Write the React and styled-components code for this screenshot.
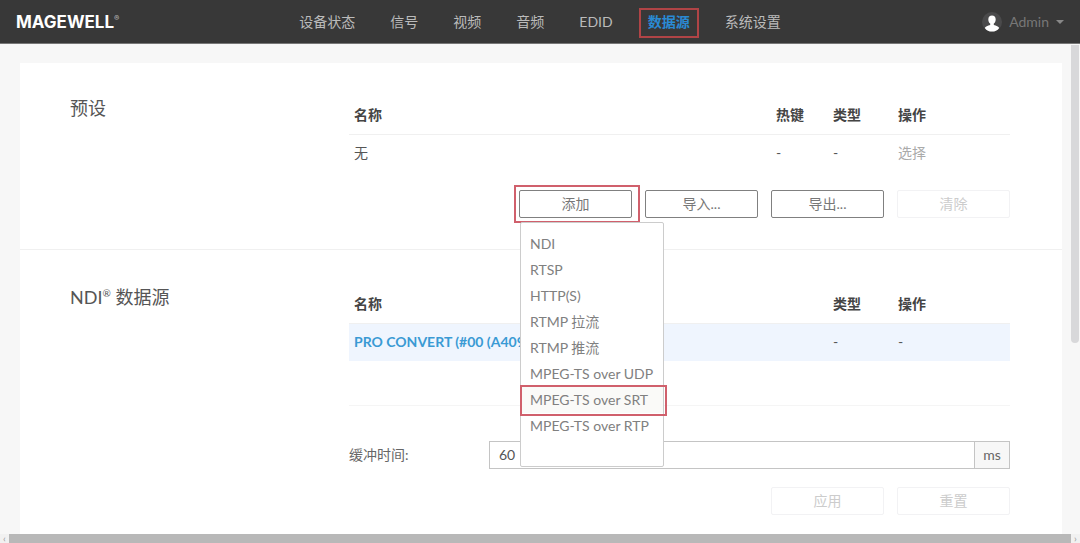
import React, { useState } from 'react';
import styled, { createGlobalStyle, css } from 'styled-components';

const navItems = ['设备状态', '信号', '视频', '音频', 'EDID', '数据源', '系统设置'];

const sourceTypes = [
  'NDI',
  'RTSP',
  'HTTP(S)',
  'RTMP 拉流',
  'RTMP 推流',
  'MPEG-TS over UDP',
  'MPEG-TS over SRT',
  'MPEG-TS over RTP',
];

const Header = () => (
  <TopBar>
    <Logo href="#home">
      MAGEWELL<LogoMark>®</LogoMark>
    </Logo>
    <Nav>
      {navItems.map((item) => (
        <NavLink key={item} href={`#${item}`} $active={item === '数据源'}>
          {item}
        </NavLink>
      ))}
    </Nav>
    <UserButton type="button">
      <svg width="20" height="20" viewBox="0 0 20 20" aria-hidden="true">
        <circle cx="10" cy="10" r="10" fill="#4a4a4b" />
        <path
          d="M10 3.6c-2.3 0-3.7 1.6-3.7 3.8 0 1.7.8 3.3 1.9 4.2v1.4c-2.500.7-4.800 1.400-5.400 2.900C4.600 18.600 7.100 19.600 10 19.600s5.400-1 7.200-3.700c-.6-1.500-2.900-2.200-5.400-2.900v-1.400c1.100-.9 1.900-2.500 1.900-4.200 0-2.200-1.400-3.800-3.700-3.800z"
          fill="#fff"
        />
      </svg>
      <span>Admin</span>
      <Caret />
    </UserButton>
  </TopBar>
);

const PresetSection = ({ isOpen, onToggle }) => (
  <Section>
    <Title>预设</Title>
    <div>
      <Table>
        <thead>
          <tr>
            <Th>名称</Th>
            <Th $width="57px">热键</Th>
            <Th $width="65px">类型</Th>
            <Th $width="117px">操作</Th>
          </tr>
        </thead>
        <tbody>
          <Row>
            <Td>无</Td>
            <Td>-</Td>
            <Td>-</Td>
            <Td $muted>选择</Td>
          </Row>
        </tbody>
      </Table>
      <ButtonRow>
        <AddBox>
          <Button type="button" aria-expanded={isOpen} onClick={onToggle}>
            添加
          </Button>
          {isOpen && (
            <Menu>
              {sourceTypes.map((type) => (
                <li key={type}>
                  <MenuItem type="button" $marked={type === 'MPEG-TS over SRT'}>
                    {type}
                  </MenuItem>
                </li>
              ))}
            </Menu>
          )}
        </AddBox>
        <Button type="button">导入...</Button>
        <Button type="button">导出...</Button>
        <Button type="button" disabled>
          清除
        </Button>
      </ButtonRow>
    </div>
  </Section>
);

const NdiSection = ({ buffer, onChange }) => (
  <Section>
    <Title>
      NDI<sup>®</sup> 数据源
    </Title>
    <div>
      <Table>
        <thead>
          <tr>
            <Th>名称</Th>
            <Th $width="65px">类型</Th>
            <Th $width="117px">操作</Th>
          </tr>
        </thead>
        <tbody>
          <Row $selected>
            <Td>PRO CONVERT (#00 (A409</Td>
            <Td>-</Td>
            <Td>-</Td>
          </Row>
        </tbody>
      </Table>
      <Divider />
      <Field>
        <label htmlFor="buffer">缓冲时间:</label>
        <InputGroup>
          <Input id="buffer" type="text" value={buffer} onChange={onChange} />
          <Unit>ms</Unit>
        </InputGroup>
      </Field>
      <ButtonRow>
        <Button type="button" disabled>
          应用
        </Button>
        <Button type="button" disabled>
          重置
        </Button>
      </ButtonRow>
    </div>
  </Section>
);

const App = () => {
  const [isOpen, setIsOpen] = useState(true);
  const [buffer, setBuffer] = useState('60');

  return (
    <Page>
      <GlobalStyle />
      <Header />
      <Body>
        <Card>
          <PresetSection isOpen={isOpen} onToggle={() => setIsOpen(!isOpen)} />
          <NdiSection buffer={buffer} onChange={(e) => setBuffer(e.target.value)} />
        </Card>
        <ScrollTrack>
          <ScrollThumb />
        </ScrollTrack>
      </Body>
      <BottomBar>
        <Arrow>‹</Arrow>
        <BottomThumb />
        <Arrow>›</Arrow>
      </BottomBar>
    </Page>
  );
};

const GlobalStyle = createGlobalStyle`
  * {
    box-sizing: border-box;
  }

  body {
    margin: 0;
    background: #f7f7f7;
    color: #666;
    font: 14px/20px Lato, 'Noto Sans CJK SC', sans-serif;
  }

  button,
  input {
    font: inherit;
  }
`;

const marker = css`
  content: '';
  position: absolute;
  border: 2px solid #d0606c;
  pointer-events: none;
`;

const Page = styled.div`
  display: flex;
  flex-direction: column;
  height: 100vh;
  overflow: hidden;
`;

const TopBar = styled.header`
  display: grid;
  grid-template-columns: 1fr auto 1fr;
  align-items: center;
  flex: none;
  height: 44px;
  padding: 0 16px;
  background: #383838;
  border-bottom: 1px solid #777;
`;

const Logo = styled.a`
  display: flex;
  color: #fff;
  font-family: Inter, sans-serif;
  font-size: 17px;
  font-weight: 700;
  text-decoration: none;
`;

const LogoMark = styled.span`
  color: #aaa;
  font-size: 8px;
  line-height: 12px;
`;

const Nav = styled.nav`
  display: flex;
  gap: 35px;
`;

const NavLink = styled.a`
  position: relative;
  color: ${({ $active }) => ($active ? '#2a8ad4' : '#bbb')};
  font-weight: ${({ $active }) => ($active ? 700 : 400)};
  text-decoration: none;

  &::after {
    ${({ $active }) =>
      $active &&
      css`
        ${marker}
        inset: -4px -9px -6px;
        border-color: #b04446;
      `}
  }
`;

const UserButton = styled.button`
  display: flex;
  align-items: center;
  justify-self: end;
  gap: 7px;
  padding: 0;
  border: 0;
  background: none;
  color: #777;
`;

const Caret = styled.span`
  border: 4px solid transparent;
  border-top-color: #888;
  border-bottom: 0;
`;

const Body = styled.div`
  display: flex;
  flex: 1;
  min-height: 0;
`;

const Card = styled.main`
  flex: 1;
  margin: 19px 9px 0 20px;
  background: #fff;
`;

const Section = styled.section`
  display: grid;
  grid-template-columns: 279px 1fr;
  padding: 33px 52px 31px 50px;

  & + & {
    padding-top: 35px;
    border-top: 1px solid #f0f0f0;
  }
`;

const Title = styled.h2`
  margin: 0;
  color: #555;
  font-size: 18px;
  font-weight: 400;
  line-height: 24px;

  sup {
    font-size: 10px;
    line-height: 0;
  }
`;

const Table = styled.table`
  width: 100%;
  border-collapse: collapse;
  table-layout: fixed;
`;

const Th = styled.th`
  width: ${({ $width }) => $width || 'auto'};
  height: 38px;
  padding: 0 5px;
  color: #444;
  font-weight: 700;
  text-align: left;
`;

const Td = styled.td`
  height: 38px;
  padding: 0 5px;
  color: ${({ $muted }) => ($muted ? '#aaa' : '#555')};
`;

const Row = styled.tr`
  background: ${({ $selected }) => ($selected ? '#eff5fe' : 'none')};
  box-shadow: inset 0 1px #f0f0f0;

  ${Td}:first-child {
    ${({ $selected }) =>
      $selected &&
      css`
        color: #3a9ad4;
        font-weight: 700;
      `}
  }
`;

const ButtonRow = styled.div`
  display: flex;
  justify-content: flex-end;
  gap: 13px;
  margin-top: 18px;
`;

const Button = styled.button`
  width: 113px;
  height: 28px;
  padding: 0;
  border: 1px solid #808080;
  border-radius: 2px;
  background: #fff;
  color: #777;

  &:disabled {
    border-color: #f2f2f4;
    color: #ccc;
  }
`;

const AddBox = styled.div`
  position: relative;

  &::after {
    ${marker}
    inset: -5px -8px -5px -5px;
  }
`;

const Menu = styled.ul`
  position: absolute;
  top: 32px;
  left: 1px;
  z-index: 1;
  width: 144px;
  margin: 0;
  padding: 8px 0 27px;
  border: 1px solid #ccc;
  border-radius: 2px;
  background: #fff;
  list-style: none;
`;

const MenuItem = styled.button`
  position: relative;
  display: block;
  width: 100%;
  height: 26px;
  padding: 0 9px;
  border: 0;
  background: ${({ $marked }) => ($marked ? '#fafaf8' : 'none')};
  color: #808080;
  text-align: left;
  white-space: nowrap;

  &::after {
    ${({ $marked }) =>
      $marked &&
      css`
        ${marker}
        inset: -2px -4px -3px -1px;
      `}
  }
`;

const Divider = styled.hr`
  margin: 44px 0 35px;
  border: 0;
  border-top: 1px solid #f5f5f5;
`;

const Field = styled.div`
  display: grid;
  grid-template-columns: 140px 1fr;
  align-items: center;
`;

const InputGroup = styled.div`
  display: flex;
  height: 28px;
  border: 1px solid #c4c4c4;
`;

const Input = styled.input`
  flex: 1;
  min-width: 0;
  padding: 0 9px;
  border: 0;
  color: #555;
`;

const Unit = styled.span`
  display: flex;
  align-items: center;
  justify-content: center;
  width: 35px;
  border-left: 1px solid #c4c4c4;
  background: #f7f7f7;
`;

const ScrollTrack = styled.div`
  width: 9px;
  padding-top: 1px;
`;

const ScrollThumb = styled.div`
  width: 8px;
  height: 61%;
  border-radius: 0 0 4px 4px;
  background: #d8d8da;
`;

const BottomBar = styled.footer`
  display: flex;
  flex: none;
  height: 9px;
  background: #f1f1f1;
`;

const BottomThumb = styled.div`
  flex: 1;
  background: #b8b8b8;
`;

const Arrow = styled.span`
  width: 9px;
  color: #999;
  font-size: 10px;
  line-height: 8px;
  text-align: center;
`;

export default App;
